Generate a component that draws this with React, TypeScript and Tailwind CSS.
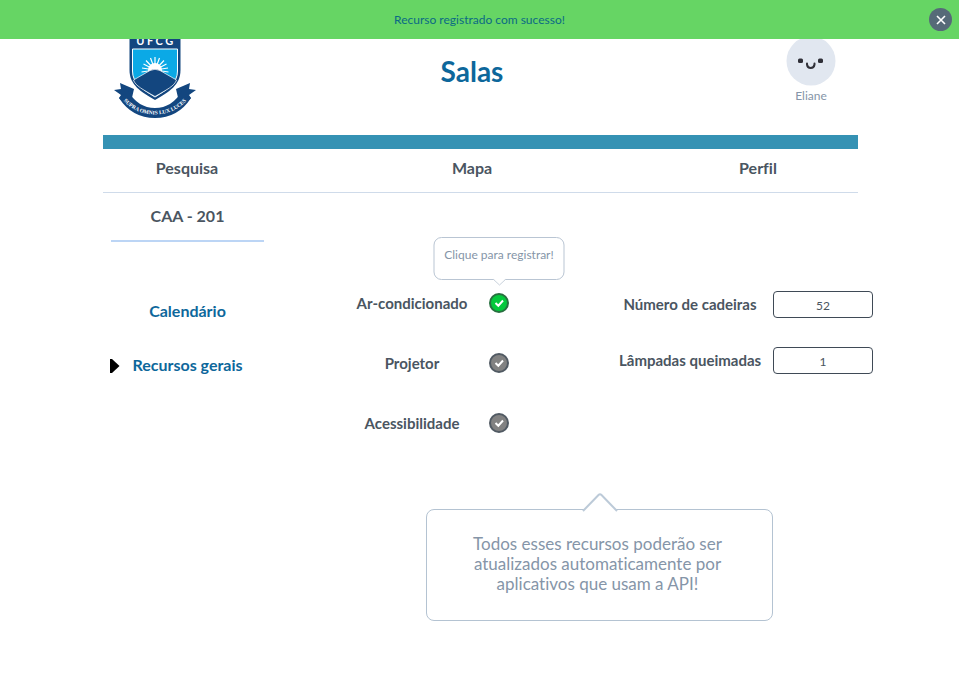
import { useState } from "react";

function Crest() {
  return (
    <svg viewBox="0 0 104 104" className="h-[104px] w-[104px]" role="img" aria-label="UFCG">
      <path d="M26.500 2H77.500V50C77.500 65 66 72 52 80C38 72 26.500 65 26.500 50Z" fill="#13467f" />
      <text x="53" y="25" textAnchor="middle" fontFamily="Lato, sans-serif" fontSize="11" fontWeight="700" letterSpacing="2.500" fill="#fff">
        UFCG
      </text>
      <path d="M29.500 29H74.500V51C74.500 63 65 69 52 77C39 69 29.500 63 29.500 51Z" fill="#0ba9e6" stroke="#fff" strokeWidth="1" />
      <circle cx="52" cy="50" r="7" fill="#fff" />
      <path
        d="M52 50L52 37M52 50L47.500 38M52 50L56.500 38M52 50L43 40.500M52 50L61 40.500M52 50L40.500 44M52 50L63.500 44M52 50L39 48M52 50L65 48M52 50L38.500 52M52 50L65.500 52"
        stroke="#fff"
        strokeWidth="1.200"
      />
      <path d="M30.500 60L47 50.500Q52 48 57 50.500L73.500 60C71.500 66 64 69.500 52 76.500C40 69.500 32.500 66 30.500 60Z" fill="#13467f" stroke="#fff" strokeWidth="0.700" />
      <path d="M11 70L18 69L17 63L31 69L28 82L20 82L16 78L18 75Z" fill="#13467f" />
      <path d="M93 70L86 69L87 63L73 69L76 82L84 82L88 78L86 75Z" fill="#13467f" />
      <path d="M25 71Q35 88 52 88Q69 88 79 71L88 78Q75 98 52 98Q29 98 16 78Z" fill="#13467f" />
      <path id="motto" d="M19 79Q32 94.500 52 94.500Q72 94.500 85 79" fill="none" />
      <text fontFamily="Liberation Serif, serif" fontSize="5.500" fontWeight="700" fill="#fff" textAnchor="middle">
        <textPath href="#motto" startOffset="50%">SUPRA OMNIS LUX LUCES</textPath>
      </text>
    </svg>
  );
}

function Face() {
  return (
    <svg viewBox="0 0 50 50" className="h-[50px] w-[50px]" aria-hidden="true">
      <circle cx="25" cy="25" r="24.500" fill="#e1e7f0" />
      <rect x="12" y="22.500" width="5" height="4.500" rx="1.500" fill="#303038" />
      <rect x="32" y="22.500" width="5" height="4.500" rx="1.500" fill="#303038" />
      <path d="M21 27.500V28.500Q21.500 32 24.700 32Q28 32 28.500 28.500V27.500" fill="none" stroke="#303038" strokeWidth="2" strokeLinecap="round" />
    </svg>
  );
}

type CheckProps = { id: string; label: string; initial?: boolean; hint?: string };

function ResourceCheck({ id, label, initial = false, hint }: CheckProps) {
  const [on, setOn] = useState(initial);
  return (
    <div className="flex h-5 items-center gap-[17px]">
      <label htmlFor={id} className="w-[120px] text-center text-[15px] font-bold text-[#4a5561]">
        {label}
      </label>
      <span className="relative flex h-5 w-5">
        <input
          id={id}
          type="checkbox"
          checked={on}
          onChange={() => setOn(!on)}
          className="h-5 w-5 appearance-none rounded-full border-2 border-[#515a63] bg-[#828282] checked:border-[#27703f] checked:bg-[#04c93c]"
        />
        <svg viewBox="0 0 20 20" className="pointer-events-none absolute inset-0 h-5 w-5" aria-hidden="true">
          <path d="M6.500 10L9.300 12.700L14 7.500" fill="none" stroke="#fff" strokeWidth="2" />
        </svg>
        {hint && (
          <span role="tooltip" className="absolute bottom-[33px] left-1/2 h-[43px] w-[131px] -translate-x-1/2 rounded-lg border border-[#b9c5d3] bg-white pt-2 text-center text-xs leading-[18px] whitespace-nowrap text-[#8595a8]">
            {hint}
            <svg viewBox="0 0 14 7" className="absolute top-full left-1/2 h-[7px] w-3.5 -translate-x-1/2 overflow-visible" aria-hidden="true">
              <path d="M0 -1H14L7 6Z" fill="#fff" />
              <path d="M0.500 0L7 6L13.500 0" fill="none" stroke="#c9d2dc" />
            </svg>
          </span>
        )}
      </span>
    </div>
  );
}

function CountField({ id, label, value }: { id: string; label: string; value: string }) {
  return (
    <div className="flex items-center gap-3">
      <label htmlFor={id} className="w-[142px] pb-0.5 text-center text-[15px] leading-6 font-bold whitespace-nowrap text-[#4a5561]">
        {label}
      </label>
      <input
        id={id}
        defaultValue={value}
        inputMode="numeric"
        className="h-[27px] w-[100px] rounded border border-[#3f4a56] bg-white pt-0.5 text-center text-xs text-[#4a5561]"
      />
    </div>
  );
}

export default function App() {
  const [notice, setNotice] = useState(true);
  return (
    <div className="min-h-screen bg-white font-['Lato',sans-serif] text-[#4a5561] [font-variant-ligatures:none]">
      {notice && (
        <div role="status" className="fixed inset-x-0 top-0 z-10 flex h-[39px] items-center justify-center bg-[#66d564] text-xs text-[#0b6a84]">
          Recurso registrado com sucesso!
          <button
            type="button"
            aria-label="Fechar"
            onClick={() => setNotice(false)}
            className="absolute right-[7px] flex h-[23px] w-[23px] items-center justify-center rounded-full bg-[#566a78] text-white"
          >
            <svg viewBox="0 0 10 10" className="h-2.5 w-2.5" aria-hidden="true">
              <path d="M1 1L9 9M9 1L1 9" stroke="currentColor" strokeWidth="1.600" />
            </svg>
          </button>
        </div>
      )}

      <div className="pr-[101px] pl-[103px]">
        <header className="grid h-[135px] grid-cols-[168px_1fr_185px]">
          <div className="pt-5">
            <Crest />
          </div>
          <h1 className="pt-[53px] text-center text-[28px] leading-9 font-bold text-[#0d679b]">Salas</h1>
          <div className="flex w-[94px] flex-col items-center justify-self-end pt-9">
            <Face />
            <span className="text-xs leading-5 text-[#8595a8]">Eliane</span>
          </div>
        </header>
        <div className="h-3.5 bg-[#3592b4]" />
        <nav className="grid h-11 grid-cols-[168px_1fr_170px] items-center border-b border-[#cfdbea] pr-[15px] pb-1.5 text-center text-base leading-6 font-bold">
          <a href="#pesquisa">Pesquisa</a>
          <a href="#mapa">Mapa</a>
          <a href="#perfil">Perfil</a>
        </nav>
      </div>

      <main className="flex pr-[86px] pl-[111px]">
        <aside className="w-[153px] shrink-0 text-center text-base leading-6 font-bold">
          <h2 className="h-[49px] border-b-2 border-[#bcd5f5] pt-[11px]">CAA - 201</h2>
          <ul className="flex flex-col gap-[30px] pt-[57px] text-[#0d679b]">
            <li>
              <a href="#calendario">Calendário</a>
            </li>
            <li className="relative">
              <svg viewBox="0 0 10 16" className="absolute top-[5px] -left-px h-4 w-2.5" aria-hidden="true">
                <path d="M0 1L2 1L9.500 8L2 15H0Z" fill="#000" />
              </svg>
              <a href="#recursos" aria-current="page">Recursos gerais</a>
            </li>
          </ul>
        </aside>

        <section className="flex-1 pt-[98px] pl-[88px]">
          <form className="flex items-start justify-between">
            <div className="flex flex-col gap-10 pt-0.5">
              <ResourceCheck id="ar" label="Ar-condicionado" initial hint="Clique para registrar!" />
              <ResourceCheck id="projetor" label="Projetor" />
              <ResourceCheck id="acessibilidade" label="Acessibilidade" />
            </div>
            <div className="flex flex-col gap-[29px]">
              <CountField id="cadeiras" label="Número de cadeiras" value="52" />
              <CountField id="lampadas" label="Lâmpadas queimadas" value="1" />
            </div>
          </form>
          <aside className="relative mt-[76px] mr-[100px] ml-[74px] h-28 rounded-lg border border-[#b4c3d2] bg-white pt-6 pr-1 text-center text-[17px] leading-5 text-[#8595a8]">
            <svg viewBox="0 0 36 20" className="absolute bottom-full left-1/2 -mb-0.5 h-5 w-9 -translate-x-1/2" aria-hidden="true">
              <path d="M0 20L18 2L36 20Z" fill="#fff" />
              <path d="M1 19L16.500 3Q18 1.500 19.500 3L35 19" fill="none" stroke="#bccad8" strokeWidth="2" />
            </svg>
            <p>
              Todos esses recursos poderão ser
              <br />
              atualizados automaticamente por
              <br />
              aplicativos que usam a API!
            </p>
          </aside>
        </section>
      </main>
    </div>
  );
}
